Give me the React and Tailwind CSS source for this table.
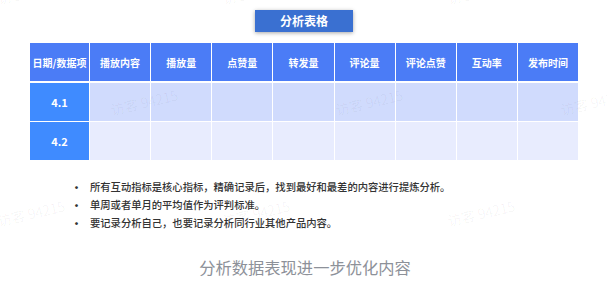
import React from 'react';

const headers = ['日期/数据项', '播放内容', '播放量', '点赞量', '转发量', '评论量', '评论点赞', '互动率', '发布时间'];

const rows = [
  { label: '4.1', bg: 'bg-[#d0dbfd]' },
  { label: '4.2', bg: 'bg-[#e8ecfe]' },
];

const notes = [
  '所有互动指标是核心指标，精确记录后，找到最好和最差的内容进行提炼分析。',
  '单周或者单月的平均值作为评判标准。',
  '要记录分析自己，也要记录分析同行业其他产品内容。',
];

// watermark centres, taken from the screenshot
const marks = [
  { x: 31, y: -9 }, { x: 256, y: -9 }, { x: 481, y: -9 },
  { x: 144, y: 102 }, { x: 369, y: 102 }, { x: 594, y: 102 },
  { x: 31, y: 213 }, { x: 256, y: 213 }, { x: 481, y: 213 },
];

const App = () => {
  return (
    <div
      className="relative w-[607px] h-[291px] overflow-hidden bg-white"
      style={{ fontFamily: '"Noto Sans CJK SC", "Noto Sans", sans-serif' }}
    >
      {/* Title */}
      <div className="flex justify-center pt-[10px] pl-[1px]">
        <div className="w-[98px] h-[22px] flex items-center justify-center bg-[#3a70d1] text-white text-[12px] font-bold shadow-[0_1px_4px_rgba(0,0,0,0.35)]">
          分析表格
        </div>
      </div>

      {/* Table */}
      <div className="mt-[11px] mx-[30px] w-[548px] grid grid-cols-[59px_repeat(8,1fr)] gap-x-px gap-y-px bg-white/80">
        {headers.map((h) => (
          <div
            key={h}
            className="h-[38px] flex items-center justify-center bg-[#4b7cf6] text-white text-[10px] font-bold whitespace-nowrap"
          >
            {h}
          </div>
        ))}
        {rows.map((r, i) => (
          <React.Fragment key={r.label}>
            <div
              className={`h-[38px] flex items-center justify-center bg-[#3f8bff] text-white text-[11px] font-bold ${i === 0 ? 'mt-px' : ''}`}
            >
              {r.label}
            </div>
            {headers.slice(1).map((h) => (
              <div key={h} className={`h-[38px] ${r.bg} ${i === 0 ? 'mt-px' : ''}`} />
            ))}
          </React.Fragment>
        ))}
      </div>

      {/* Notes */}
      <ul className="mt-[18px] pl-[71px] flex flex-col">
        {notes.map((n) => (
          <li key={n} className="h-[18px] flex items-center text-[10.3px] font-medium text-[#333]">
            <span className="w-[19px] text-[11px] leading-none font-bold">•</span>
            {n}
          </li>
        ))}
      </ul>

      {/* Caption */}
      <div className="mt-[25px] flex justify-center pl-[3px] text-[16.3px] leading-[20px] text-[#8d9199]">
        分析数据表现进一步优化内容
      </div>

      {/* Watermarks */}
      <div className="absolute inset-0 pointer-events-none">
        {marks.map((m, i) => (
          <div
            key={i}
            className="absolute w-[80px] -ml-[40px] -mt-[10px] h-[20px] flex items-center justify-center -rotate-[13deg] text-[14px] font-light text-black/[0.06] whitespace-nowrap"
            style={{ left: m.x, top: m.y }}
          >
            访客 94215
          </div>
        ))}
      </div>
    </div>
  );
};

export default App;
